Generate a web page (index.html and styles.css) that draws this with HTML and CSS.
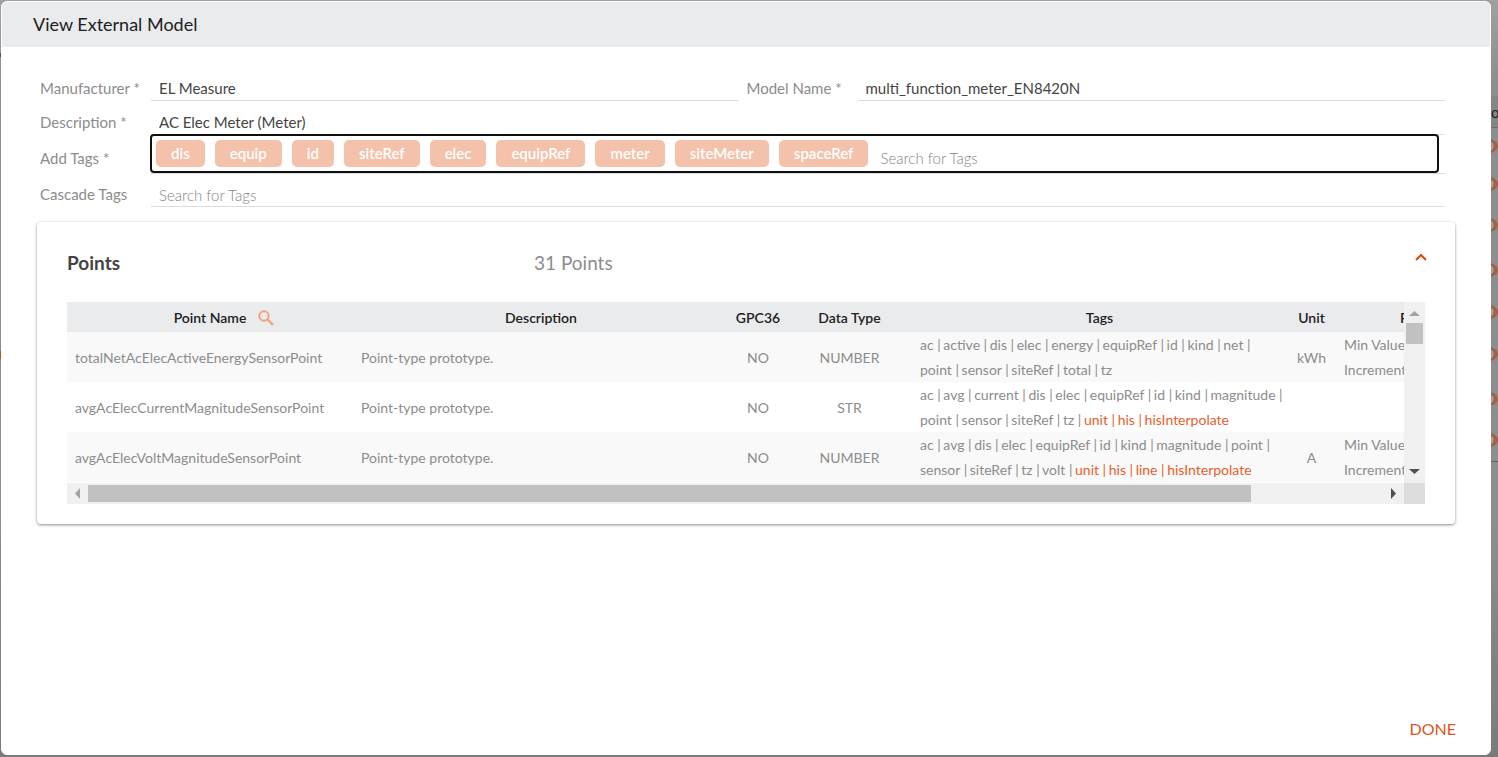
FILE: index.html
```html
<!DOCTYPE html>
<html lang="en">
<head>
<meta charset="utf-8">
<title>View External Model</title>
<link rel="stylesheet" href="styles.css">
</head>
<body>
<main class="dialog" role="dialog" aria-labelledby="dialog-title">
  <header class="dialog-header"><h1 id="dialog-title">View External Model</h1></header>
  <form class="form">
    <div class="row">
      <label class="label" for="manufacturer">Manufacturer *</label>
      <div class="field"><input class="input" id="manufacturer" value="EL Measure"></div>
      <label class="label second" for="model">Model Name *</label>
      <div class="field"><input class="input" id="model" value="multi_function_meter_EN8420N"></div>
    </div>
    <div class="row">
      <label class="label" for="description">Description *</label>
      <div class="field"><input class="input" id="description" value="AC Elec Meter (Meter)"></div>
    </div>
    <div class="row tag-row">
      <label class="label" for="tags">Add Tags *</label>
      <div class="field">
        <div class="chips">
          <span class="chip">dis</span><span class="chip">equip</span><span class="chip">id</span><span class="chip">siteRef</span><span class="chip">elec</span><span class="chip">equipRef</span><span class="chip">meter</span><span class="chip">siteMeter</span><span class="chip">spaceRef</span>
          <input class="input chip-input" id="tags" placeholder="Search for Tags">
        </div>
      </div>
    </div>
    <div class="row cascade-row">
      <label class="label" for="cascade">Cascade Tags</label>
      <div class="field"><input class="input" id="cascade" placeholder="Search for Tags"></div>
    </div>
  </form>
  <section class="card">
    <div class="card-header">
      <h2>Points</h2>
      <p class="count">31 Points</p>
      <button class="toggle" type="button" aria-label="Collapse">
        <svg width="12" height="8" viewBox="0 0 12 8"><path d="M1 7l5-5 5 5" fill="none" stroke="#e04403" stroke-width="2"/></svg>
      </button>
    </div>
    <div class="scroller">
      <div class="viewport">
        <table class="points">
          <colgroup><col class="c-name"><col class="c-desc"><col class="c-gpc"><col class="c-type"><col class="c-tags"><col class="c-unit"><col class="c-data"></colgroup>
          <thead>
            <tr>
              <th><div class="name-head"><span>Point Name</span>
                <button class="search" type="button" aria-label="Search"><svg width="16" height="16" viewBox="0 0 16 16" fill="none" stroke="#f5a17c"><circle cx="6" cy="6" r="4.700" stroke-width="2"/><path d="M9.500 9.500L15 15" stroke-width="2.400"/></svg></button></div></th>
              <th>Description</th><th>GPC36</th><th>Data Type</th><th>Tags</th><th>Unit</th><th class="data-head">Presentation</th>
            </tr>
          </thead>
          <tbody>
            <tr>
              <td>totalNetAcElecActiveEnergySensorPoint</td><td>Point-type prototype.</td><td class="mid">NO</td><td class="mid">NUMBER</td>
              <td>ac <i>|</i> active <i>|</i> dis <i>|</i> elec <i>|</i> energy <i>|</i> equipRef <i>|</i> id <i>|</i> kind <i>|</i> net <i>|</i><br>point <i>|</i> sensor <i>|</i> siteRef <i>|</i> total <i>|</i> tz</td>
              <td class="mid">kWh</td><td>Min Value<br>Increment</td>
            </tr>
            <tr>
              <td>avgAcElecCurrentMagnitudeSensorPoint</td><td>Point-type prototype.</td><td class="mid">NO</td><td class="mid">STR</td>
              <td>ac <i>|</i> avg <i>|</i> current <i>|</i> dis <i>|</i> elec <i>|</i> equipRef <i>|</i> id <i>|</i> kind <i>|</i> magnitude <i>|</i><br>point <i>|</i> sensor <i>|</i> siteRef <i>|</i> tz <i>|</i> <span class="new">unit <i>|</i> his <i>|</i> hisInterpolate</span></td>
              <td></td><td></td>
            </tr>
            <tr>
              <td>avgAcElecVoltMagnitudeSensorPoint</td><td>Point-type prototype.</td><td class="mid">NO</td><td class="mid">NUMBER</td>
              <td>ac <i>|</i> avg <i>|</i> dis <i>|</i> elec <i>|</i> equipRef <i>|</i> id <i>|</i> kind <i>|</i> magnitude <i>|</i> point <i>|</i><br>sensor <i>|</i> siteRef <i>|</i> tz <i>|</i> volt <i>|</i> <span class="new">unit <i>|</i> his <i>|</i> line <i>|</i> hisInterpolate</span></td>
              <td class="mid">A</td><td>Min Value<br>Increment</td>
            </tr>
          </tbody>
        </table>
      </div>
      <div class="bar vertical">
        <svg width="21" height="21" viewBox="0 0 21 21"><path d="M5 14h11l-5.500-5z" fill="#a3a3a3"/></svg>
        <span class="thumb"></span>
        <svg class="end" width="21" height="21" viewBox="0 0 21 21"><path d="M5 7h11l-5.500 5z" fill="#505050"/></svg>
      </div>
      <div class="bar horizontal">
        <svg width="21" height="21" viewBox="0 0 21 21"><path d="M13 5v11l-5-5.500z" fill="#a3a3a3"/></svg>
        <span class="track"><span class="thumb"></span></span>
        <svg class="end" width="21" height="21" viewBox="0 0 21 21"><path d="M8 5v11l5-5.500z" fill="#505050"/></svg>
      </div>
      <div class="corner"></div>
    </div>
  </section>
  <footer class="actions"><button class="done" type="button">DONE</button></footer>
</main>
<aside class="behind" aria-hidden="true">
  <div class="behind-head">o</div>
  <svg width="7" height="334" viewBox="0 0 7 334">
    <defs><g id="eye"><ellipse cx="-3" rx="10" ry="7" fill="#a0624a"/><circle cx="-2" r="4.500" fill="#a8a8a0"/><circle cx="-2" r="2.500" fill="#a0624a"/></g></defs>
    <use href="#eye" y="18"/><use href="#eye" y="56"/><use href="#eye" y="97"/><use href="#eye" y="142"/><use href="#eye" y="184"/><use href="#eye" y="226"/><use href="#eye" y="271"/><use href="#eye" y="312"/>
    <path d="M0 333.500h7" stroke="#606060"/>
  </svg>
</aside>
</body>
</html>
```
FILE: styles.css
```css
* { box-sizing: border-box; }
body {
  margin: 0;
  min-height: 100vh;
  display: flex;
  background:
    linear-gradient(#7a4a2a, #7a4a2a) 0 53px / 1px 4px no-repeat,
    linear-gradient(#a0602a, #a0602a) 0 351px / 1px 8px no-repeat,
    linear-gradient(#a0a0a0, #8e8e8e 80px, #8e8e8e 520px, #7a7a7a);
  font: 15px/20px Lato, sans-serif;
  color: #444;
}
h1, h2, p { margin: 0; }
button { border: 0; padding: 0; background: none; font: inherit; }
svg { display: block; }

.dialog {
  flex: 1;
  min-width: 0;
  margin: 1px 0 2px 1px;
  display: flex;
  flex-direction: column;
  background: #fff;
  border: 1px solid #fff;
  border-radius: 6px;
  overflow: hidden;
}
.dialog-header { background: #eaebed; padding: 11px 31px 12px; }
.dialog-header h1 { font-size: 18px; line-height: 22px; font-weight: 400; color: #212121; }

.form { padding: 20px 45px 0 38px; }
.row { display: flex; align-items: flex-end; height: 34px; }
.label { flex: none; width: 111px; color: #8c8c8c; padding-bottom: 3px; }
.label.second { width: 119px; padding-left: 8px; }
.field { flex: 1; min-width: 0; border-bottom: 1px solid #dcdcdc; }
.input {
  display: block;
  width: 100%;
  height: 24px;
  border: 0;
  outline: 0;
  padding: 0 8px;
  background: none;
  font: inherit;
  color: #444;
}
.input::placeholder { color: #858585; font-weight: 300; opacity: 1; }
.tag-row { height: 39px; }
.tag-row .label { padding-bottom: 6px; }
.cascade-row { height: 33px; }
.cascade-row .input { height: 23px; }
.chips {
  display: flex;
  gap: 10px;
  height: 35px;
  margin: 0 8px 2px 1px;
  padding: 4px;
  outline: 2px solid #101010;
  border-radius: 2px;
}
.chip {
  padding: 3px 15px 4px;
  height: 27px;
  border-radius: 5px;
  background: #f4c1ab;
  color: #fff;
  font-weight: 600;
}
.chip-input { flex: 1; width: 0; height: 27px; padding: 9px 2px 0; }

.card {
  margin: 15px 35px 0;
  padding: 29px 30px 20px;
  border-radius: 4px;
  box-shadow: 0 1px 3px rgba(0, 0, 0, .45);
}
.card-header { display: flex; align-items: flex-start; margin-bottom: 27px; line-height: 24px; }
.card-header h2 { width: 467px; font-size: 19px; line-height: 24px; }
.count { flex: 1; font-size: 19px; color: #8c8c8c; }
.toggle { padding: 2px 0 8px 8px; margin-right: -2px; }

.scroller { display: grid; grid-template-columns: minmax(0, 1fr) 21px; grid-template-rows: 181px 21px; }
.viewport { overflow: hidden; }
.points { width: 1489px; border-collapse: collapse; table-layout: fixed; font-size: 14px; color: #8c8c8c; }
.c-name { width: 286px; }
.c-desc { width: 376px; }
.c-gpc { width: 58px; }
.c-type { width: 125px; }
.c-tags { width: 375px; }
.c-unit { width: 49px; }
.c-data { width: 220px; }
.points th { height: 30px; padding: 2px 0 0; background: #eaebed; color: #212121; font-weight: 600; }
.points .data-head { text-align: left; padding-left: 64px; }
.points td { height: 50px; padding: 0 8px; line-height: 25px; white-space: nowrap; }
.points tbody tr:nth-child(odd) { background: #f9f9f9; }
.points .mid { text-align: center; padding: 0; }
.points i { font-style: normal; margin-right: -1px; }
.name-head { display: grid; grid-template-columns: 1fr auto 1fr; align-items: center; }
.name-head span { grid-column: 2; }
.search { margin-left: 12px; }
.new { color: #e6602c; }

.bar { display: flex; background: #f0f0f0; }
.bar svg { flex: none; }
.bar .end { margin-top: auto; }
.vertical { flex-direction: column; }
.vertical .thumb { height: 21px; margin: 0 2px; background: #c1c1c1; }
.track { flex: 1; display: flex; padding: 2px 0; }
.track .thumb { width: 89.8%; background: #c1c1c1; }
.corner { background: #dcdcdc; }

.actions { margin-top: auto; display: flex; justify-content: flex-end; padding: 0 34px 15px; }
.done { font-size: 16px; line-height: 20px; color: #e0531c; }

.behind { width: 7px; overflow: hidden; padding-top: 96px; }
.behind-head { height: 32px; line-height: 32px; background: #858585; border-bottom: 1px solid #707070; color: #222; }
```
